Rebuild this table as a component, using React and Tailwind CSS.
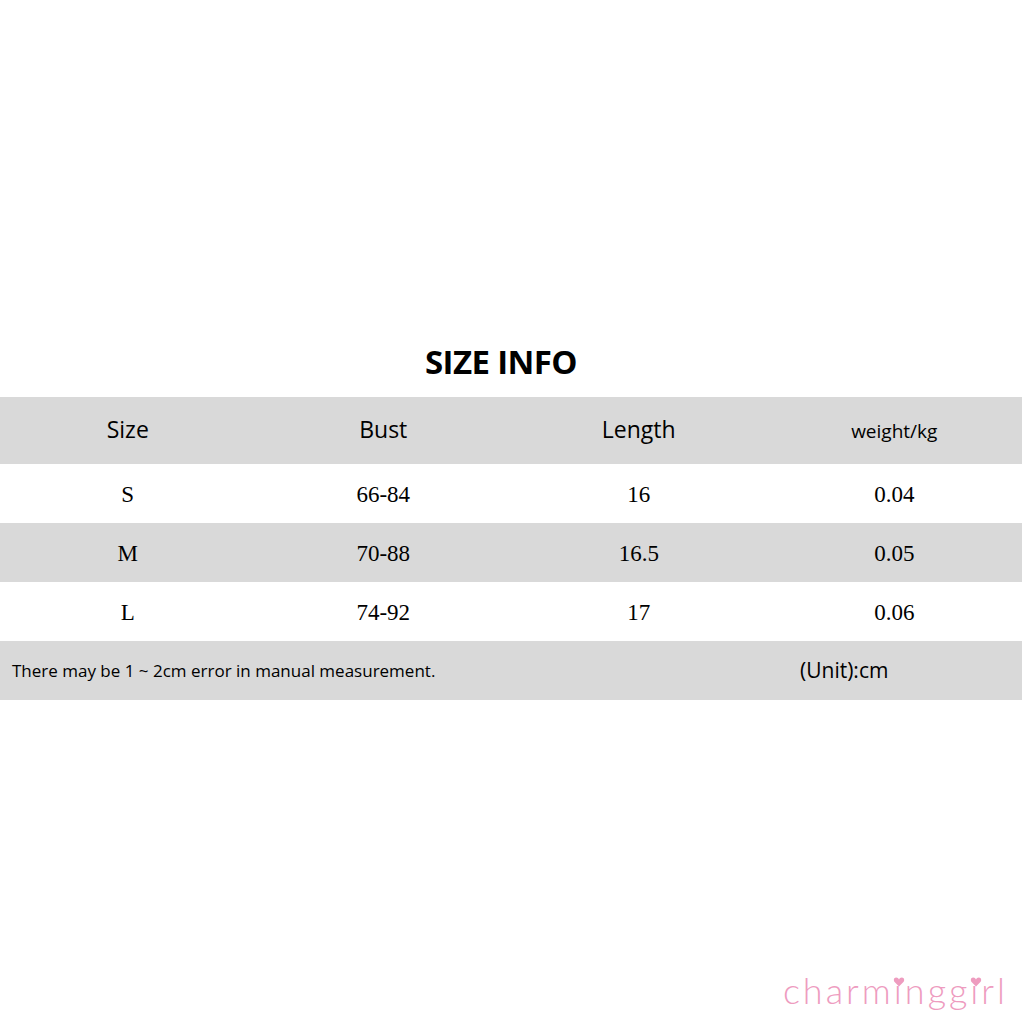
export default function App() {
  const rows = [
    ["S", "66-84", "16", "0.04"],
    ["M", "70-88", "16.5", "0.05"],
    ["L", "74-92", "17", "0.06"],
  ];

  const Heart = () => (
    <svg
      viewBox="0 0 10 9"
      className="absolute left-1/2 -translate-x-1/2 top-[5px] w-[11px] h-[10px]"
    >
      <path
        d="M5 8.5 L1 4.5 C-0.5 3 0.2 0.5 2.5 0.5 C3.7 0.5 4.5 1.3 5 2.2 C5.5 1.3 6.3 0.5 7.5 0.5 C9.8 0.5 10.5 3 9 4.5 Z"
        fill="#ee9cbf"
      />
    </svg>
  );

  const I = () => (
    <span className="relative inline-block">
      ı
      <Heart />
    </span>
  );

  return (
    <div className="w-[1024px] h-[1024px] bg-white flex flex-col font-['Open_Sans',sans-serif] text-black">
      <div className="h-[331px]" />

      <h1 className="h-[66px] pb-[4px] flex items-center justify-center pr-[22px] text-[33px] font-bold tracking-[-0.6px] text-black">
        SIZE INFO
      </h1>

      <div className="w-[1022px] flex flex-col">
        {/* header */}
        <div className="h-[67px] bg-[#d9d9d9] grid grid-cols-4 items-center text-center text-[23px] font-medium pb-[2px]">
          <div>Size</div>
          <div>Bust</div>
          <div>Length</div>
          <div className="text-[19px] pt-[3px]">weight/kg</div>
        </div>

        {rows.map((r, i) => (
          <div
            key={r[0]}
            className={`h-[59px] grid grid-cols-4 items-center text-center text-[23px] pt-[3px] font-['Liberation_Serif',serif] ${
              i % 2 === 1 ? "bg-[#d9d9d9]" : "bg-white"
            }`}
          >
            {r.map((c, j) => (
              <div key={j}>{c}</div>
            ))}
          </div>
        ))}

        {/* footer */}
        <div className="h-[59px] bg-[#d9d9d9] flex items-center text-[17px]">
          <div className="pl-[12px] w-[780px]">
            There may be 1 ~ 2cm error in manual measurement.
          </div>
          <div className="text-[21px] pl-[20px]">(Unit):cm</div>
        </div>
      </div>

      <div className="flex-1 flex items-end justify-end pr-[16px] pb-[16px]">
        <div className="text-[36px] font-['Lato',sans-serif] font-light text-[#ee9cbf] tracking-[3px] leading-none">
          charm<I />ngg<I />rl
        </div>
      </div>
    </div>
  );
}
